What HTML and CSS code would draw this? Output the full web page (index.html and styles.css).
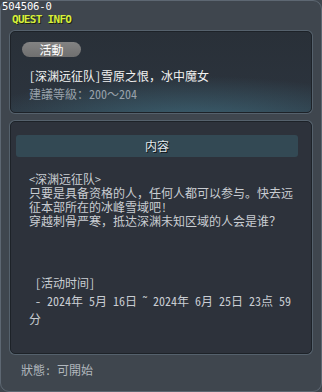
FILE: index.html
```html
<!DOCTYPE html>
<html>
<head>
<meta charset="utf-8">
<link rel="stylesheet" href="styles.css">
</head>
<body>
<div class="panel">
  <div class="hdr">
    <div class="hdr-id">504506-0</div>
    <div class="hdr-title">QUEST INFO</div>
  </div>
  <div class="card card-top">
    <div class="pill">活動</div>
    <div class="top-text">
      <div class="title">[深渊远征队]雪原之恨，冰中魔女</div>
      <div class="level">建議等級：200～204</div>
    </div>
  </div>
  <div class="card card-content">
    <div class="bar">内容</div>
    <div class="desc">&lt;深渊远征队&gt;
只要是具备资格的人，任何人都可以参与。快去远征本部所在的冰峰雪域吧!
穿越刺骨严寒，抵达深渊未知区域的人会是谁？</div>
    <div class="time"> [活动时间]
 - 2024年 5月 16日 ˜ 2024年 6月 25日 23点 59 分</div>
  </div>
  <div class="status">狀態: 可開始</div>
</div>
</body>
</html>
```

FILE: styles.css
```css
* { box-sizing: border-box; }
html, body { margin: 0; padding: 0; background: #3f464e; }
body { width: 322px; height: 392px; overflow: hidden; }

.panel {
  width: 322px;
  height: 392px;
  border: 1px solid #5d6772;
  border-radius: 9px;
  background: #3f464e;
  padding: 0 9px;
  font-family: "Noto Sans Mono CJK SC", "Noto Sans CJK SC", sans-serif;
  font-size: 12px;
  color: #c9cdd2;
}

.hdr { height: 30px; margin: 0 -9px; }
.hdr-id {
  font-family: "DejaVu Sans Mono", monospace;
  font-size: 10.5px;
  line-height: 11px;
  letter-spacing: -0.1px;
  color: #ffffff;
  padding-left: 1px;
}
.hdr-title {
  font-family: "DejaVu Sans Mono", monospace;
  font-weight: bold;
  font-size: 11px;
  line-height: 13px;
  letter-spacing: -0.7px;
  color: #d6ef3c;
  text-shadow: 1px 1px 0 #1d2410;
  padding-left: 11px;
  margin-top: 0.6px;
}

.card {
  border: 1px solid #1d2228;
  border-radius: 5px;
  box-shadow: 0 0 0 1px #55616c;
}

.card-top {
  height: 82px;
  padding: 10px 10px 0 11px;
  background:
    radial-gradient(ellipse 75% 60% at 60% 115%, rgba(64, 110, 128, 0.8) 0%, rgba(64, 110, 128, 0) 100%),
    linear-gradient(#293038, #2c343e);
}

.pill {
  width: 59px;
  height: 15px;
  border-radius: 8px;
  background: linear-gradient(#838383, #6f6f6f);
  color: #ffffff;
  text-align: center;
  line-height: 15px;
  font-size: 12px;
}

.top-text { padding-left: 7px; margin-top: 10px; }
.title { line-height: 18px; color: #f2f2f2; }
.level { line-height: 18px; color: #98a1aa; }

.card-content {
  margin-top: 8px;
  height: 233px;
  padding: 13px 13px 0 5px;
  background: #2d323b;
}

.bar {
  height: 22px;
  line-height: 22px;
  background: #334954;
  border-radius: 3px;
  text-align: center;
  color: #e2e8ec;
  text-shadow: 1px 1px 0 #0e1216;
}

.desc {
  margin-top: 15px;
  margin-left: 13px;
  width: 268px;
  line-height: 14px;
  white-space: pre-wrap;
}

.time {
  margin-top: 46px;
  margin-left: 13px;
  width: 268px;
  line-height: 18px;
  white-space: pre-wrap;
}

.status {
  margin-top: 9px;
  padding-left: 11px;
  line-height: 14px;
  color: #b1b7bd;
}
```
